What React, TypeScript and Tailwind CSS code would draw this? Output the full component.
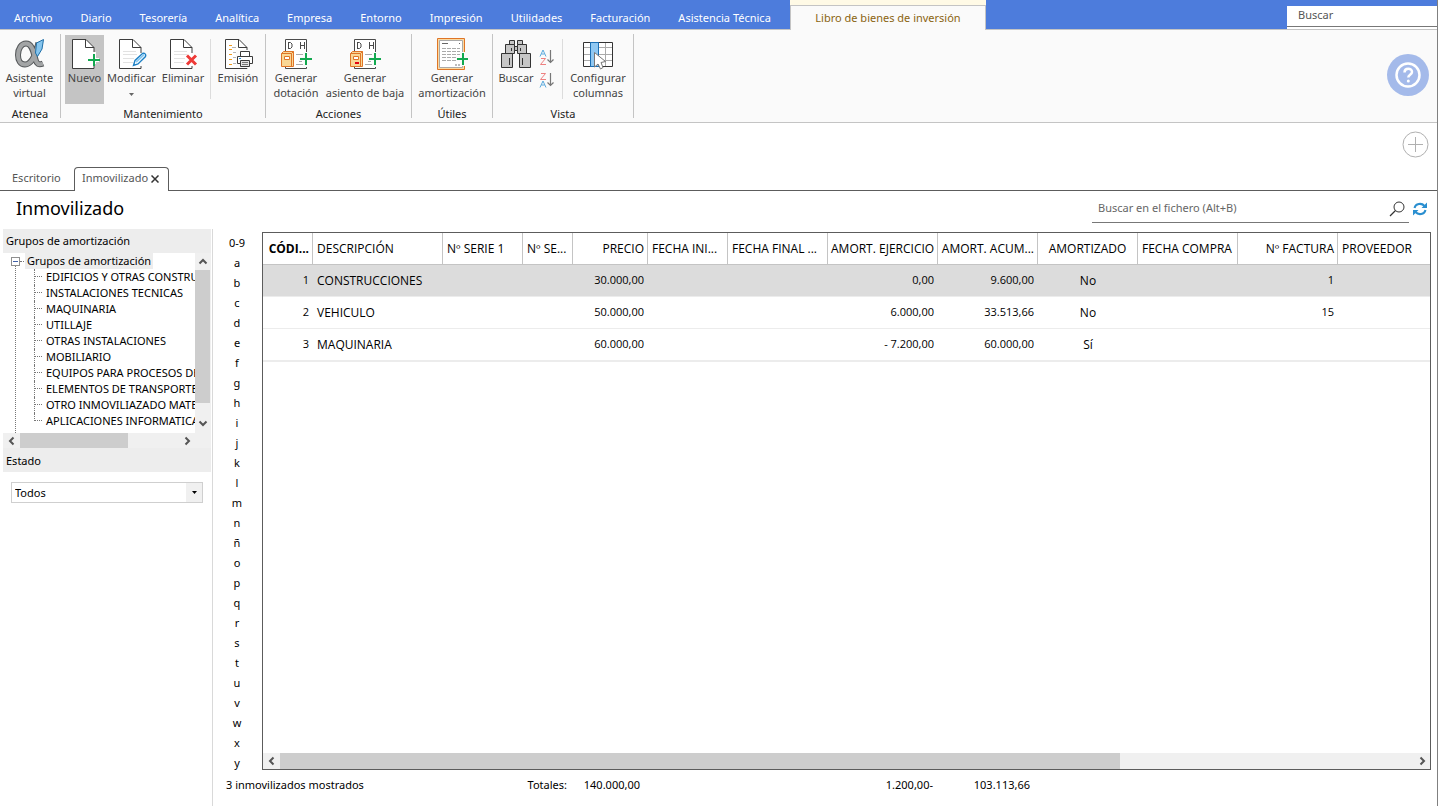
import type { ReactNode } from 'react';
import clsx from 'clsx';

const MENU_ITEMS = [
  'Archivo',
  'Diario',
  'Tesorería',
  'Analítica',
  'Empresa',
  'Entorno',
  'Impresión',
  'Utilidades',
  'Facturación',
  'Asistencia Técnica',
];

const GROUPS = [
  'EDIFICIOS Y OTRAS CONSTRUCCIONES',
  'INSTALACIONES TECNICAS',
  'MAQUINARIA',
  'UTILLAJE',
  'OTRAS INSTALACIONES',
  'MOBILIARIO',
  'EQUIPOS PARA PROCESOS DE INFORMACION',
  'ELEMENTOS DE TRANSPORTE',
  'OTRO INMOVILIAZADO MATERIAL',
  'APLICACIONES INFORMATICAS',
];

const LETTERS = ['0-9', ...'abcdefghijklmnñopqrstuvwxy'];

interface Column {
  key: string;
  label: string;
  width?: number;
  align: 'left' | 'right' | 'center';
  numeric?: boolean;
}

const COLUMNS: Column[] = [
  { key: 'codigo', label: 'CÓDI...', width: 50, align: 'right', numeric: true },
  { key: 'descripcion', label: 'DESCRIPCIÓN', width: 130, align: 'left' },
  { key: 'serie1', label: 'Nº SERIE 1', width: 80, align: 'left' },
  { key: 'serie2', label: 'Nº SE...', width: 50, align: 'left' },
  { key: 'precio', label: 'PRECIO', width: 75, align: 'right', numeric: true },
  { key: 'fechaInicio', label: 'FECHA INI...', width: 80, align: 'left' },
  { key: 'fechaFinal', label: 'FECHA FINAL ...', width: 100, align: 'left' },
  { key: 'ejercicio', label: 'AMORT. EJERCICIO', width: 110, align: 'right', numeric: true },
  { key: 'acumulada', label: 'AMORT. ACUM...', width: 100, align: 'right', numeric: true },
  { key: 'amortizado', label: 'AMORTIZADO', width: 100, align: 'center' },
  { key: 'fechaCompra', label: 'FECHA COMPRA', width: 100, align: 'left' },
  { key: 'factura', label: 'Nº FACTURA', width: 100, align: 'right', numeric: true },
  { key: 'proveedor', label: 'PROVEEDOR', align: 'left' },
];

const ROWS: Record<string, string>[] = [
  { codigo: '1', descripcion: 'CONSTRUCCIONES', precio: '30.000,00', ejercicio: '0,00', acumulada: '9.600,00', amortizado: 'No', factura: '1' },
  { codigo: '2', descripcion: 'VEHICULO', precio: '50.000,00', ejercicio: '6.000,00', acumulada: '33.513,66', amortizado: 'No', factura: '15' },
  { codigo: '3', descripcion: 'MAQUINARIA', precio: '60.000,00', ejercicio: '- 7.200,00', acumulada: '60.000,00', amortizado: 'Sí' },
];

const ALIGN = {
  left: 'text-left',
  right: 'text-right',
  center: 'text-center',
};

/* ---------- Icons ---------- */

function Icon({ children }: { children: ReactNode }) {
  return (
    <svg viewBox="0 0 32 32" className="h-8 w-8 shrink-0" fill="none" aria-hidden="true">
      {children}
    </svg>
  );
}

function Sheet({ lines = true }: { lines?: boolean }) {
  return (
    <>
      <path d="M3.5 1.5H17L25 9.5V30.5H3.5Z" fill="#fff" />
      <path d="M25 15V9.5L17 1.5H3.5V30.5H25V28" stroke="#3c3c3c" />
      <path d="M16.5 1.5V9.5H25" stroke="#3c3c3c" />
      {lines && <path d="M7 13.5H20M7 16.5H21M7 20.5H18M7 24.5H17" stroke="#e2e2e2" />}
    </>
  );
}

function AlphaIcon() {
  const alpha = 'M24.5 4.500C22.500 14 18 26.500 11 26.500C6.500 26.500 4 22.500 4 17C4 10.500 7.500 5.500 12 5.500C18.500 5.500 19.500 15 21.500 21.500C22.500 25.500 24.500 27.500 29 25.500';
  return (
    <Icon>
      <path d={alpha} stroke="#55585a" strokeWidth="6" />
      <path d={alpha} stroke="#a3a5a6" strokeWidth="4" />
      <path d="M22.500 5L29.500 1.500L28 11L23.500 18.500L21.500 15Z" fill="#86c5ee" stroke="#1f6fa8" />
    </Icon>
  );
}

function NewIcon() {
  return (
    <Icon>
      <Sheet lines={false} />
      <path d="M25 14V26M19 22H30" stroke="#fff" strokeWidth="4" />
      <path d="M25 16V28M19 22H31" stroke="#12a84f" strokeWidth="2" />
    </Icon>
  );
}

function EditIcon() {
  return (
    <Icon>
      <Sheet />
      <path d="M17.500 27.500L19 22.500L26.500 15.500C28.500 14.500 30.500 16.500 29.500 18.500L22 26Z" fill="#fff" stroke="#1d7fc4" strokeWidth="1.400" />
      <path d="M20 24L28 16.500" stroke="#8ccaf2" strokeWidth="2" />
    </Icon>
  );
}

function DeleteIcon() {
  return (
    <Icon>
      <Sheet />
      <path d="M20 17L29 27M29 17L20 27" stroke="#fff" strokeWidth="5" />
      <path d="M20 17.500L29 26.500M29 17.500L20 26.500" stroke="#ee3a37" strokeWidth="3" />
    </Icon>
  );
}

function PrintIcon() {
  return (
    <Icon>
      <Sheet lines={false} />
      <path d="M7 7.500H10M7 11.500H10M7 16.500H10M7 21.500H10M7 26.500H10" stroke="#ef9b1e" />
      <path d="M10 9.500H14M11 14.500H14M11 19.500H14M11 25.500H14" stroke="#b5b5b5" />
      <path d="M14 12H32V30H14Z" fill="#fafafa" />
      <path d="M18.500 18.500V13.500H27.500V18.500M18.500 25.500H15.500V18.500H30.500V25.500H27.500" fill="#fff" stroke="#3c3c3c" />
      <path d="M18.500 22.500H27.500V28.500H18.500Z" fill="#e5e5e5" stroke="#3c3c3c" />
      <path d="M20 24.500H26M20 26.500H26" stroke="#777" />
      <path d="M17 20.500H19" stroke="#2a8fd8" />
    </Icon>
  );
}

function LedgerIcon({ minus = false }: { minus?: boolean }) {
  return (
    <Icon>
      <path d="M5.500 1.500H26.500V30.500H5.500Z" fill="#fff" />
      <path d="M26.500 15V1.500H5.500V30.500H26.500V28" stroke="#4a4a4a" />
      <path d="M8.500 4V11M8.500 4.500H10.500L12 6V9L10.500 10.500H8.500M20.500 4V11M24.500 4V11M20.500 7.500H24.500" stroke="#4a4a4a" />
      <path d="M16 16.500H23M19 20.500H20M19 23.500H22M16 26.500H23" stroke="#aaa" />
      <path d="M3.500 13.500H13.500V28.500H1.500V15.500Z" fill="#f9d795" stroke="#df7526" />
      <path d="M1.500 15.500H11.500V28.500M11.500 15.500L13.500 13.500" stroke="#df7526" />
      <path d="M4.500 18.500H9.500V21.500H4.500Z" fill="#fff" stroke="#df7526" />
      {minus && <path d="M6 25H10" stroke="#e30613" strokeWidth="2" />}
      <path d="M25.500 14V29M18 21H32" stroke="#fafafa" strokeWidth="4" />
      <path d="M26 15V27M20 21H32" stroke="#12a84f" strokeWidth="2" />
    </Icon>
  );
}

function AmortizeIcon() {
  return (
    <Icon>
      <path d="M1.500 .500H28.500V31.500H1.500Z" fill="#fbd9a0" stroke="#df7526" />
      <path d="M3.500 2.500H26.500V29.500H3.500Z" fill="#fff" stroke="#aaa" />
      <path d="M6 5.500H12M23 5.500H24" stroke="#666" />
      <path d="M6 10.500H24M6 13.500H24M6 16.500H24M6 19.500H20M6 22.500H20" stroke="#aaa" strokeDasharray="4 1" />
      <path d="M19 27H24" stroke="#bbb" strokeWidth="2" strokeDasharray="2 1" />
      <path d="M27 14V28M20 21H32" stroke="#fafafa" strokeWidth="5" />
      <path d="M27 15V27M21 21H32" stroke="#12a84f" strokeWidth="2" />
    </Icon>
  );
}

function BinocularsIcon() {
  return (
    <Icon>
      <g fill="#c6c6c6" stroke="#333">
        <path d="M9.500 2.500H14.500V6.500H9.500ZM17.500 2.500H22.500V6.500H17.500Z" />
        <path d="M5.500 6.500H14.500V15.500H5.500ZM17.500 6.500H26.500V15.500H17.500Z" />
        <path d="M14.500 8.500H17.500V12.500H14.500Z" />
        <path d="M1.500 15.500H12.500V29.500H1.500ZM19.500 15.500H30.500V29.500H19.500Z" />
      </g>
      <path d="M11.500 10V13M20.500 10V13M9.500 20V27M22.500 20V27" stroke="#333" />
    </Icon>
  );
}

function SortIcon({ descending = false }: { descending?: boolean }) {
  const letterA = 'M0 6.500L3 0L6 6.500M1.500 4H4.500';
  const letterZ = 'M1 .500H5.500L.500 6.500H6';
  return (
    <svg viewBox="0 0 16 17" className="h-[17px] w-4" fill="none" aria-hidden="true">
      <path d={descending ? letterZ : letterA} stroke={descending ? '#ee8080' : '#5aa9dc'} transform="translate(1 1)" />
      <path d={descending ? letterA : letterZ} stroke={descending ? '#5aa9dc' : '#ee8080'} transform="translate(1 9)" />
      <path d="M11.500 1V13.500M8.500 10.500L11.500 13.500L14.500 10.500" stroke="#777" strokeWidth="1.200" />
    </svg>
  );
}

function ColumnsIcon() {
  return (
    <Icon>
      <path d="M1.500 4.500H30.500V28.500H1.500Z" fill="#fff" />
      <path d="M2 9.500H30M2 16.500H30M2 22.500H30M23.500 5V28" stroke="#aaa" />
      <path d="M1.500 4.500H30.500V28.500H1.500Z" stroke="#333" />
      <path d="M8.500 4.500H16.500V28.500H8.500Z" fill="#90c8f2" stroke="#1a6fb5" />
      <path d="M12.500 14.500V29L16 26L18.500 31L21 29.500L19 24.500L23.500 23.500Z" fill="#fff" stroke="#777" />
    </Icon>
  );
}

function Chevron({ dir }: { dir: 'up' | 'down' | 'left' | 'right' }) {
  const paths = {
    up: 'M1.500 6.500L5 3L8.500 6.500',
    down: 'M1.500 3.500L5 7L8.500 3.500',
    left: 'M6.500 1.500L3 5L6.500 8.500',
    right: 'M3.500 1.500L7 5L3.500 8.500',
  };
  return (
    <svg viewBox="0 0 10 10" className="h-2.5 w-2.5" fill="none" aria-hidden="true">
      <path d={paths[dir]} stroke="#555" strokeWidth="2" />
    </svg>
  );
}

/* ---------- Ribbon ---------- */

interface RibbonButtonProps {
  icon: ReactNode;
  lines: string[];
  className: string;
  active?: boolean;
  dropdown?: boolean;
}

function RibbonButton({ icon, lines, className, active, dropdown }: RibbonButtonProps) {
  return (
    <button
      className={clsx(
        'flex h-[69px] flex-col items-center whitespace-nowrap pt-[3px] leading-[15px] text-[#444]',
        active && 'bg-[#c4c4c4]',
        className,
      )}
    >
      {icon}
      {lines.map((line) => (
        <span key={line}>{line}</span>
      ))}
      {dropdown && (
        <svg viewBox="0 0 5 3" className="mt-2 h-[3px] w-[5px]" aria-hidden="true">
          <path d="M0 0H5L2.500 3Z" fill="#666" />
        </svg>
      )}
    </button>
  );
}

function RibbonGroup({ label, className, children }: { label: string; className: string; children: ReactNode }) {
  return (
    <section className={clsx('flex h-[84px] flex-col border-r border-[#c4c4c4]', className)}>
      <div className="flex pt-px">{children}</div>
      <h2 className="pt-0.5 text-center leading-[15px] text-[#222]">{label}</h2>
    </section>
  );
}

function RibbonDivider() {
  return <div className="mx-[3px] mt-1 h-[60px] w-px bg-[#dcdcdc]" />;
}

function Ribbon() {
  return (
    <div className="flex h-[93px] items-start border-b border-[#c4c4c4] bg-[#fafafa] pt-1">
      <RibbonGroup label="Atenea" className="w-[61px]">
        <RibbonButton icon={<AlphaIcon />} lines={['Asistente', 'virtual']} className="w-[59px]" />
      </RibbonGroup>
      <RibbonGroup label="Mantenimiento" className="w-[205px]">
        <RibbonButton icon={<NewIcon />} lines={['Nuevo']} className="ml-1 w-[39px]" active />
        <RibbonButton icon={<EditIcon />} lines={['Modificar']} className="w-[55px]" dropdown />
        <RibbonButton icon={<DeleteIcon />} lines={['Eliminar']} className="w-12" />
        <RibbonDivider />
        <RibbonButton icon={<PrintIcon />} lines={['Emisión']} className="w-12" />
      </RibbonGroup>
      <RibbonGroup label="Acciones" className="w-[146px]">
        <RibbonButton icon={<LedgerIcon />} lines={['Generar', 'dotación']} className="ml-1 w-[52px]" />
        <RibbonButton icon={<LedgerIcon minus />} lines={['Generar', 'asiento de baja']} className="w-[86px]" />
      </RibbonGroup>
      <RibbonGroup label="Útiles" className="w-[81px]">
        <RibbonButton icon={<AmortizeIcon />} lines={['Generar', 'amortización']} className="w-20" />
      </RibbonGroup>
      <RibbonGroup label="Vista" className="w-[141px]">
        <RibbonButton icon={<BinocularsIcon />} lines={['Buscar']} className="w-[46px]" />
        <div className="flex w-[20px] flex-col items-start gap-1.5 pt-3.5">
          <button aria-label="Orden ascendente">
            <SortIcon />
          </button>
          <button aria-label="Orden descendente">
            <SortIcon descending />
          </button>
        </div>
        <RibbonDivider />
        <RibbonButton icon={<ColumnsIcon />} lines={['Configurar', 'columnas']} className="w-[64px]" />
      </RibbonGroup>
      <button aria-label="Ayuda" className="mt-5 mr-2 ml-auto">
        <svg viewBox="0 0 42 42" className="h-[42px] w-[42px]" fill="none" aria-hidden="true">
          <circle cx="21" cy="21" r="21" fill="#a4baea" />
          <circle cx="21" cy="21" r="11.500" stroke="#fff" strokeWidth="2.500" />
          <path d="M17.500 18.500C17.500 13.500 25 13.800 25 18C25 20.800 21.300 20.800 21.300 23.500" stroke="#fff" strokeWidth="2.500" />
          <circle cx="21.300" cy="27" r="1.500" fill="#fff" />
        </svg>
      </button>
    </div>
  );
}

function MenuBar() {
  return (
    <header className="flex h-[30px] bg-[#4d7cdc]">
      <nav className="flex w-[790px] border-b border-[#c4c4c4] pt-[7px] whitespace-nowrap text-white">
        {MENU_ITEMS.map((item) => (
          <button key={item} className="px-3.5">
            {item}
          </button>
        ))}
      </nav>
      <button className="w-[196px] border-t-[5px] border-[#fffae6] bg-[#fafafa] text-[#8a6410]">
        <span className="flex h-[25px] items-center justify-center border-x border-t border-[#c4c4c4]">
          Libro de bienes de inversión
        </span>
      </button>
      <div className="flex flex-1 justify-end border-b border-[#c4c4c4] pt-1.5">
        <div className="w-[150px] bg-white">
          <input
            aria-label="Buscar"
            placeholder="Buscar"
            className="block h-[21px] w-full border-b border-[#777] pb-1 pl-[11px] outline-none placeholder:text-[#555]"
          />
        </div>
      </div>
    </header>
  );
}

/* ---------- Side panel ---------- */

function GroupTree() {
  return (
    <div className="bg-[#f0f0f0]">
      <div className="flex h-[180px]">
        <div className="relative min-w-0 flex-1 overflow-hidden bg-white">
          <div className="absolute top-3 bottom-0 left-3 border-l border-dotted border-[#777]" />
          <div className="flex h-4 items-center">
            <button
              aria-label="Contraer"
              className="relative ml-2 flex h-[9px] w-[9px] items-center justify-center border border-[#8f8f8f] bg-white"
            >
              <span className="h-px w-[5px] bg-[#4060a8]" />
            </button>
            <span className="mr-px w-1 border-t border-dotted border-[#777]" />
            <span className="bg-[#ededed] px-0.5 leading-4">Grupos de amortización</span>
          </div>
          <ul>
            {GROUPS.map((group, i) => (
              <li key={group} className="flex h-4 whitespace-nowrap pl-[31px] leading-4">
                <span
                  className={clsx(
                    'mr-1 w-2 shrink-0 border-l border-dotted border-[#777]',
                    i === GROUPS.length - 1 ? 'h-2' : 'h-4',
                  )}
                >
                  <span className="block h-2 border-b border-dotted border-[#777]" />
                </span>
                {group}
              </li>
            ))}
          </ul>
        </div>
        <div className="flex w-4 flex-col items-center pr-px">
          <span className="flex h-[17px] items-center">
            <Chevron dir="up" />
          </span>
          <span className="h-[133px] w-full bg-[#cdcdcd]" />
          <span className="mt-auto flex h-5 items-center">
            <Chevron dir="down" />
          </span>
        </div>
      </div>
      <div className="flex h-[15px] items-center pr-4">
        <span className="flex w-[17px] justify-center">
          <Chevron dir="left" />
        </span>
        <span className="h-full w-[108px] bg-[#cdcdcd]" />
        <span className="ml-auto flex w-[17px] justify-center">
          <Chevron dir="right" />
        </span>
      </div>
    </div>
  );
}

function SidePanel() {
  return (
    <aside className="w-[213px] shrink-0 border-r border-[#d9d9d9] pr-px pl-[3px]">
      <h2 className="h-6 bg-[#ededed] pl-[3px] leading-6">Grupos de amortización</h2>
      <GroupTree />
      <label htmlFor="estado" className="block h-6 bg-[#ededed] pt-px pl-[3px] leading-6">
        Estado
      </label>
      <div className="relative mx-2 mt-2.5">
        <select
          id="estado"
          className="block h-[21px] w-full appearance-none border border-[#cfcfcf] bg-white pt-px pl-[3px] outline-none"
        >
          <option>Todos</option>
        </select>
        <span className="pointer-events-none absolute top-px right-px flex h-[19px] w-4 items-center justify-center bg-[#f0f0f0]">
          <svg viewBox="0 0 5 3" className="h-[3px] w-[5px]" aria-hidden="true">
            <path d="M0 0H5L2.500 3Z" fill="#000" />
          </svg>
        </span>
      </div>
    </aside>
  );
}

/* ---------- Assets table ---------- */

function AssetTable() {
  return (
    <div className="mr-1.5 flex min-w-0 flex-1 flex-col border border-[#5c5c5c]">
      <table className="w-full table-fixed border-separate border-spacing-0 font-['Open_Sans','Noto_Sans',sans-serif]">
        <colgroup>
          {COLUMNS.map((col) => (
            <col key={col.key} style={{ width: col.width }} />
          ))}
        </colgroup>
        <thead>
          <tr className="h-8">
            {COLUMNS.map((col, i) => (
              <th
                key={col.key}
                className={clsx(
                  'whitespace-nowrap border-b border-[#c4c4c4] text-[12px]',
                  i === 0 ? 'font-bold' : 'font-normal',
                  i < COLUMNS.length - 1 && 'border-r',
                  col.align === 'right' ? 'px-[3px]' : 'px-1',
                  ALIGN[col.align],
                )}
              >
                {col.label}
              </th>
            ))}
          </tr>
        </thead>
        <tbody>
          {ROWS.map((row, i) => (
            <tr key={row.codigo} className={clsx('h-8', i === 0 && 'bg-[#dcdcdc]')}>
              {COLUMNS.map((col) => (
                <td
                  key={col.key}
                  className={clsx(
                    'whitespace-nowrap border-b border-[#ececec] px-1',
                    col.numeric ? 'text-[11px]' : 'text-[12px]',
                    ALIGN[col.align],
                  )}
                >
                  {row[col.key]}
                </td>
              ))}
            </tr>
          ))}
        </tbody>
      </table>
      <div className="h-px bg-[#ececec]" />
      <div className="mt-auto flex h-4 items-center bg-[#f0f0f0]">
        <span className="flex w-[17px] justify-center">
          <Chevron dir="left" />
        </span>
        <span className="mr-auto h-full w-[840px] bg-[#cdcdcd]" />
        <span className="flex w-[17px] justify-center">
          <Chevron dir="right" />
        </span>
      </div>
    </div>
  );
}

export default function App() {
  return (
    <div className="flex min-h-screen flex-col border-r border-[#808080] bg-white font-['Noto_Sans','Open_Sans',sans-serif] text-[11px] text-black">
      <MenuBar />
      <Ribbon />

      <div className="flex h-11 items-center justify-end pr-2 pb-0.5">
        <button aria-label="Añadir">
          <svg viewBox="0 0 28 28" className="h-7 w-7" fill="none" stroke="#b0b0b0" aria-hidden="true">
            <circle cx="14.500" cy="14.500" r="12.500" />
            <path d="M14.500 7V22M7 14.500H22" />
          </svg>
        </button>
      </div>

      {/* Document tabs */}
      <div className="flex h-6 text-[#555]">
        <button className="w-[74px] border-b border-[#5c5c5c] pl-3 text-left">Escritorio</button>
        <div className="flex w-[95px] items-center rounded-t-[4px] border-x border-t border-[#5c5c5c] pb-0.5 pl-[7px] whitespace-nowrap">
          Inmovilizado
          <button aria-label="Cerrar" className="ml-[3px]">
            <svg viewBox="0 0 8 8" className="h-2 w-2" aria-hidden="true">
              <path d="M.500 .500L7.500 7.500M7.500 .500L.500 7.500" stroke="#333" strokeWidth="1.500" />
            </svg>
          </button>
        </div>
        <div className="flex-1 border-b border-[#5c5c5c]" />
      </div>

      {/* Title and file search */}
      <div className="flex h-[38px] justify-between">
        <h1 className="pl-4 text-[18px] leading-[34px]">Inmovilizado</h1>
        <div className="flex h-8 items-center gap-1 pr-2.5">
          <div className="flex h-8 w-[317px] items-center border-b border-[#777] pt-1">
            <input
              aria-label="Buscar en el fichero"
              placeholder="Buscar en el fichero (Alt+B)"
              className="min-w-0 flex-1 pl-1.5 outline-none placeholder:text-[#666]"
            />
            <svg viewBox="0 0 16 16" className="mr-1 h-4 w-4" fill="none" stroke="#333" aria-hidden="true">
              <circle cx="10" cy="6" r="5" />
              <path d="M6.500 9.500L1 15" strokeWidth="1.200" />
            </svg>
          </div>
          <button aria-label="Actualizar">
            <svg viewBox="0 0 14 14" className="mt-1 h-3.5 w-3.5" fill="none" stroke="#2a8fd0" strokeWidth="2" aria-hidden="true">
              <path d="M1.500 6C2.500 1.500 8.500 .500 11.500 4M12.500 8C11.500 12.500 5.500 13.500 2.500 10" />
              <path d="M14 .500V6H8.500ZM0 13.500V8H5.500Z" fill="#2a8fd0" stroke="none" />
            </svg>
          </button>
        </div>
      </div>

      <div className="flex flex-1">
        <SidePanel />
        <main className="flex min-w-0 flex-1 flex-col">
          <div className="flex flex-1 pt-[3px]">
            <nav className="mr-px -mb-3 flex w-12 shrink-0 flex-col pt-px">
              {LETTERS.map((letter) => (
                <button key={letter} className="h-5 leading-4">
                  {letter}
                </button>
              ))}
            </nav>
            <AssetTable />
          </div>
          <footer className="grid h-9 grid-cols-[354px_73px_293px_97px] text-right leading-[30px]">
            <div className="flex justify-between pl-[13px]">
              <span>3 inmovilizados mostrados</span>
              <span>Totales:</span>
            </div>
            <span>140.000,00</span>
            <span>1.200,00-</span>
            <span>103.113,66</span>
          </footer>
        </main>
      </div>
    </div>
  );
}
